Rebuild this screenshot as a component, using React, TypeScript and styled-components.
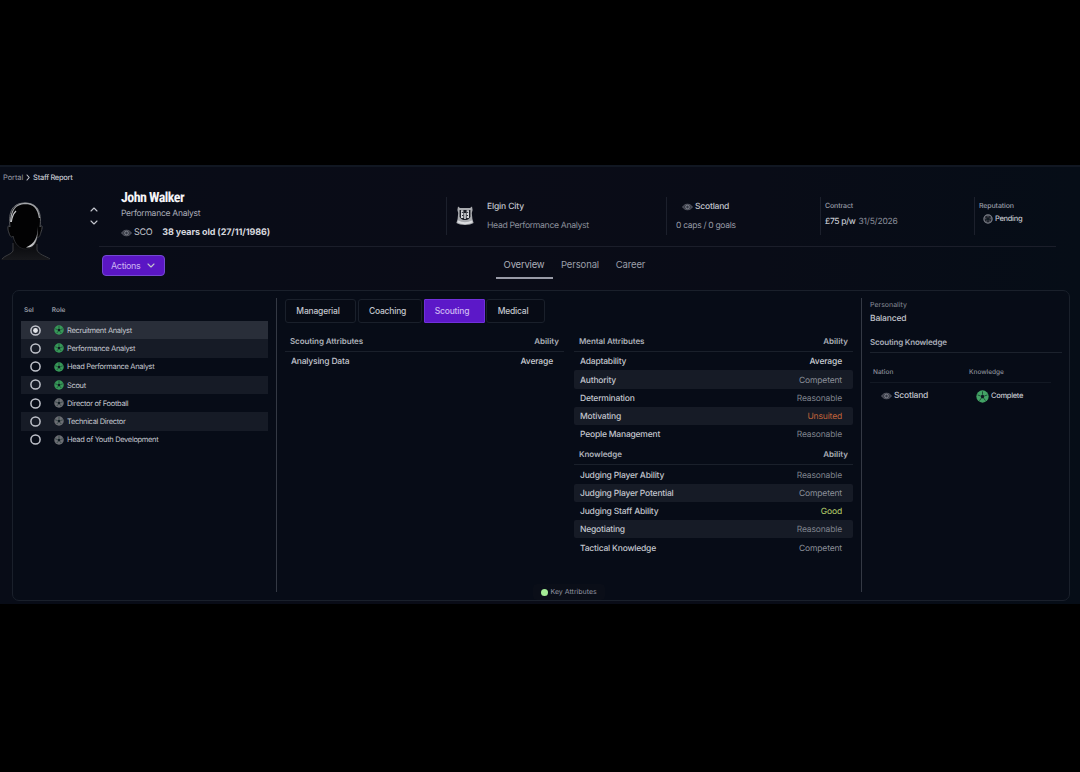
import React, { useState } from 'react';
import styled, { createGlobalStyle } from 'styled-components';

const GlobalStyle = createGlobalStyle`
  * {
    box-sizing: border-box;
  }

  body {
    margin: 0;
    background: #000;
    font-family: Inter, "Liberation Sans", sans-serif;
    color: #c3c6ce;
    text-rendering: geometricPrecision;
  }

  button {
    font-family: inherit;
    margin: 0;
    padding: 0;
    border: none;
    background: none;
    color: inherit;
  }
`;

const Page = styled.div`
  height: 772px;
  padding-top: 165px;
  background: #000;
  overflow: hidden;
`;

const Screen = styled.div`
  display: flex;
  flex-direction: column;
  height: 439px;
  padding-bottom: 3px;
  border-top: 2px solid #111722;
  background: linear-gradient(90deg, #080c17 0%, #0a0c17 45%, #090c17 70%, #060d17 100%);
`;

interface TextProps {
  size?: number;
  color?: string;
  weight?: number;
  spacing?: number;
}

const Text = styled.span<TextProps>`
  font-size: ${props => props.size ?? 8.5}px;
  line-height: 12px;
  font-weight: ${props => props.weight ?? 400};
  color: ${props => props.color ?? '#c3c6ce'};
  letter-spacing: ${props => props.spacing ?? 0}px;
  white-space: nowrap;
`;

const Breadcrumb = styled.nav`
  display: flex;
  align-items: center;
  gap: 3px;
  height: 21px;
  padding: 0 0 0 3px;
`;

const Header = styled.header`
  display: flex;
  height: 102px;
`;

const PortraitColumn = styled.div`
  display: flex;
  justify-content: space-between;
  width: 99px;
  padding-top: 14px;
`;

const Stepper = styled.div`
  display: flex;
  flex-direction: column;
  gap: 8px;
  width: 9px;
  padding-top: 5px;
`;

const HeaderBody = styled.div`
  flex: 1;
  margin-right: 24px;
`;

const InfoRow = styled.div`
  display: flex;
  height: 59px;
  border-bottom: 1px solid #1b1e2a;
`;

const Identity = styled.div`
  width: 347px;
  padding: 2px 0 0 22px;
`;

const Name = styled.h1`
  margin: 0;
  font-family: "Liberation Sans Narrow", "Roboto Condensed", "DejaVu Sans Condensed", sans-serif;
  font-size: 14px;
  line-height: 16px;
  font-weight: 700;
  letter-spacing: -0.55px;
  color: #f4f5f8;
`;

const Line = styled.div<{ top?: number; gap?: number; left?: number }>`
  display: flex;
  align-items: center;
  gap: ${props => props.gap ?? 3}px;
  height: 12px;
  margin-top: ${props => props.top ?? 0}px;
  padding-left: ${props => props.left ?? 0}px;
`;

const Fact = styled.div<{ width: number; indent: number; top: number }>`
  display: flex;
  width: ${props => props.width}px;
  height: 38px;
  margin-top: 9px;
  padding: ${props => props.top}px 0 0 ${props => props.indent}px;
  border-left: 1px solid #1c202c;
`;

const NavRow = styled.div`
  display: flex;
  align-items: flex-start;
  padding: 8px 0 0 3px;
`;

const ActionsButton = styled.button`
  display: flex;
  align-items: center;
  justify-content: space-between;
  width: 63px;
  height: 21px;
  padding: 0 9px 0 8px;
  border: 1px solid #7448d2;
  border-radius: 4px;
  background: #5a16c4;
`;

const PageTabs = styled.div`
  display: flex;
  margin-left: 331px;
`;

const PageTab = styled.button<{ active?: boolean; width: number }>`
  width: ${props => props.width}px;
  height: 24px;
  padding: 0 1px 6px 0;
  border-bottom: 2px solid ${props => (props.active ? '#999ba7' : 'transparent')};
`;

const Panel = styled.main`
  display: flex;
  height: 311px;
  margin: 0 10px 0 12px;
  padding: 7px 7px 8px 8px;
  border: 1px solid #1a202b;
  border-radius: 7px;
  background: #070c17;
`;

const Roles = styled.section`
  width: 255px;
`;

const RoleHead = styled.div`
  display: flex;
  height: 23px;
  padding: 6px 0 0 3px;
`;

const RoleRow = styled.div<{ shade?: string }>`
  display: flex;
  align-items: center;
  width: 247px;
  height: 18.25px;
  padding-left: 9px;
  background: ${props => props.shade ?? 'transparent'};

  > ${Text} {
    padding-top: 1.4px;
  }
`;

const Radio = styled.button`
  display: flex;
  margin-right: 13px;
`;

const RoleBadge = styled.span`
  display: flex;
  margin-right: 3px;
`;

const Attributes = styled.section`
  display: flex;
  flex-direction: column;
  width: 586px;
  padding: 1px 8px 0 8px;
  border-left: 1px solid #343944;
  border-right: 1px solid #343944;
`;

const CategoryTabs = styled.div`
  display: flex;
  height: 24px;
`;

const CategoryTab = styled.button<{ active?: boolean; width: number; gap: number }>`
  display: flex;
  align-items: center;
  justify-content: center;
  width: ${props => props.width}px;
  height: 24px;
  margin-right: ${props => props.gap}px;
  padding: 0 5px 1px 0;
  border: 1px solid ${props => (props.active ? '#7130db' : '#1a202b')};
  border-radius: ${props => (props.active ? 1 : 3)}px;
  background: ${props => (props.active ? '#5c18c8' : '#070b15')};
`;

const Tables = styled.div`
  display: flex;
  justify-content: space-between;
  flex: 1;
  padding-top: 7px;
`;

const Table = styled.div`
  width: 279px;
`;

const TableHead = styled.div`
  display: flex;
  justify-content: space-between;
  align-items: center;
  height: 22px;
  padding: 1px 5px 0;
  border-bottom: 1px solid #1a202b;
`;

const TableRow = styled.div<{ striped?: boolean }>`
  display: flex;
  justify-content: space-between;
  align-items: center;
  height: 18.25px;
  padding: 2.4px 11px 0 6px;
  border-radius: 2px;
  background: ${props => (props.striped ? '#161b26' : 'transparent')};
`;

/* the legend hangs over the lower end of the column rules */
const Legend = styled.div`
  display: flex;
  align-items: center;
  align-self: center;
  gap: 3px;
  width: 72px;
  height: 16px;
  margin: 0 1px -8px 0;
  padding-left: 8px;
  border-radius: 4px;
  background: #0a0e18;
`;

const LegendDot = styled.span`
  width: 7px;
  height: 7px;
  border-radius: 50%;
  background: #a4ec96;
`;

const Side = styled.section`
  display: flex;
  flex-direction: column;
  flex: 1;
  padding: 1px 0 0 8px;
`;

const SideTitle = styled.div`
  display: flex;
  height: 17px;
  margin-top: 11px;
  border-bottom: 1px solid #1c222d;
`;

const SideGrid = styled.div<{ ruled?: boolean; height: number; indent: number; first: number }>`
  display: grid;
  grid-template-columns: ${props => props.first}px 1fr;
  align-items: center;
  width: 181px;
  height: ${props => props.height}px;
  padding: ${props => (props.ruled ? 8 : 1)}px 0 0 ${props => props.indent}px;
  border-bottom: 1px solid ${props => (props.ruled ? '#131924' : 'transparent')};
`;

const Portrait = () => (
  <svg width="50" height="59" viewBox="0 0 50 59">
    <defs>
      <linearGradient id="shoulders" x1="0" y1="0" x2="0" y2="1">
        <stop offset="0" stopColor="#050609" />
        <stop offset="1" stopColor="#17181c" />
      </linearGradient>
      <linearGradient id="rim" x1="0" y1="0" x2="0" y2="1">
        <stop offset="0" stopColor="#8c8e92" />
        <stop offset="0.5" stopColor="#55575b" />
        <stop offset="1" stopColor="#1b1c20" />
      </linearGradient>
      <linearGradient id="jaw" x1="0" y1="0" x2="0" y2="1">
        <stop offset="0" stopColor="#4b4c50" />
        <stop offset="1" stopColor="#d3d4d6" />
      </linearGradient>
    </defs>
    <path d="M1 58C4 53 11 53 13 48V38H37V47C38 53 47 54 50 58Z" fill="url(#shoulders)" />
    <path d="M2 57C5 53 11 53 13 49V41M37 42V48C39 53 46 54 50 57" fill="none" stroke="#3e3f43" strokeWidth="0.9" />
    <path
      d="M10 25C8 22 7 26 9 31C10 35 12 36 13 34C15 43 20 47 26 47C32 47 36 42 37 35C39 36 40 34 41 30C43 25 42 22 40 25C42 9 37 1 25 1C13 1 8 9 10 25Z"
      fill="#020203"
      stroke="url(#rim)"
      strokeWidth="0.9"
    />
    <path d="M10.6 20C11 8 15 2 25 1.4C34 1.5 38 6 39.5 16" fill="none" stroke="#a4a6aa" strokeWidth="1.3" />
    <path d="M11.3 20C12 14 13 12 16 9" fill="none" stroke="#c4c5c7" strokeWidth="1.2" />
    <path d="M38 24C37.3 36 35 41 26 45.5C34 46.5 38.6 39 38 24Z" fill="url(#jaw)" />
  </svg>
);

const Crest = () => (
  <svg width="20" height="22" viewBox="0 0 20 22">
    <path d="M3 1.5L5 3H15L17 1.5L17.6 5L16.8 8L17.4 14L18.6 18C15 20.5 5 20.5 1.4 18L2.6 14L3.2 8L2.4 5Z" fill="#a9abaf" />
    <path d="M4.6 5V12C6 14.5 8 15 10 15C12 15 14 14.5 15.4 12V5Z" fill="#1c1e25" />
    <path d="M6 5.2H8.4V13H6ZM11.6 5.2H14V13H11.6ZM9.2 8H10.8V14H9.2Z" fill="#d4d5d8" />
    <path d="M6.8 7.4H8.6M11.4 7.4H13.2M7 10.5H8.4M11.6 10.5H13" stroke="#2a2d34" strokeWidth="1" />
    <path d="M2.8 16.4C7 18.9 13 18.9 17.2 16.4" fill="none" stroke="#dcdde0" strokeWidth="2" />
  </svg>
);

const Eye = () => (
  <svg width="11" height="8" viewBox="0 0 11 8">
    <path d="M0.6 4C2.8 0.3 8.2 0.3 10.4 4C8.2 7.7 2.8 7.7 0.6 4Z" fill="#3a3d47" stroke="#5d606b" strokeWidth="0.9" />
    <circle cx="5.5" cy="4" r="1.8" fill="#343844" stroke="#868993" strokeWidth="0.9" />
  </svg>
);

const RadioMark = ({ checked }: { checked: boolean }) => (
  <svg width="11" height="11" viewBox="0 0 11 11">
    <circle cx="5.5" cy="5.5" r="4.6" fill="none" stroke="#c0c3cb" strokeWidth="1.5" />
    {checked && <circle cx="5.5" cy="5.5" r="2.4" fill="#e4e6ea" />}
  </svg>
);

const Badge = ({ color, size = 10, hollow = false }: { color: string; size?: number; hollow?: boolean }) => (
  <svg width={size} height={size} viewBox="0 0 12 12">
    <circle cx="6" cy="6" r={hollow ? 4.9 : 5.7} fill={hollow ? '#20232c' : color} stroke={hollow ? color : 'none'} strokeWidth="1.5" />
    <g stroke={hollow ? color : '#123228'} strokeWidth="0.7">
      <path d="M6 4V1.3M8 5.4L10.5 4.6M7.2 7.6L8.7 9.8M4.8 7.6L3.3 9.8M4 5.4L1.5 4.6" />
    </g>
    <path d="M6 4.1L7.8 5.4L7.1 7.5H4.9L4.2 5.4Z" fill="#101b22" />
  </svg>
);

const Chevron = ({ d, width = 8, height = 5 }: { d: string; width?: number; height?: number }) => (
  <svg width={width} height={height} viewBox={`0 0 ${width} ${height}`}>
    <path d={d} fill="none" stroke="#c4c6ce" strokeWidth="1.1" strokeLinecap="round" strokeLinejoin="round" />
  </svg>
);

const roles = [
  { name: 'Recruitment Analyst', suited: true },
  { name: 'Performance Analyst', suited: true },
  { name: 'Head Performance Analyst', suited: true },
  { name: 'Scout', suited: true },
  { name: 'Director of Football', suited: false },
  { name: 'Technical Director', suited: false },
  { name: 'Head of Youth Development', suited: false },
];

const mental = [
  ['Adaptability', 'Average'],
  ['Authority', 'Competent'],
  ['Determination', 'Reasonable'],
  ['Motivating', 'Unsuited'],
  ['People Management', 'Reasonable'],
];

const knowledge = [
  ['Judging Player Ability', 'Reasonable'],
  ['Judging Player Potential', 'Competent'],
  ['Judging Staff Ability', 'Good'],
  ['Negotiating', 'Reasonable'],
  ['Tactical Knowledge', 'Competent'],
];

const abilityColors: Record<string, string> = {
  Average: '#c9ccd3',
  Competent: '#8b8f99',
  Reasonable: '#7e828c',
  Unsuited: '#c2643a',
  Good: '#b9d36c',
};

const categories = [
  { name: 'Managerial', width: 71, gap: 2 },
  { name: 'Coaching', width: 64, gap: 2 },
  { name: 'Scouting', width: 61, gap: 1 },
  { name: 'Medical', width: 59, gap: 0 },
];

const AttributeGroup = ({ title, rows }: { title: string; rows: string[][] }) => (
  <>
    <TableHead>
      <Text size={8} weight={600} color="#adb1ba" spacing={-0.08}>{title}</Text>
      <Text size={8} weight={600} color="#adb1ba">Ability</Text>
    </TableHead>
    {rows.map(([name, ability], i) => (
      <TableRow key={name} striped={i % 2 === 1}>
        <Text weight={500} spacing={-0.2}>{name}</Text>
        <Text weight={ability === 'Average' ? 500 : 400} color={abilityColors[ability]} spacing={-0.15}>{ability}</Text>
      </TableRow>
    ))}
  </>
);

const App: React.FC = () => {
  const [selectedRole, setSelectedRole] = useState(0);
  const [category, setCategory] = useState('Scouting');

  const roleShade = (i: number) => {
    if (i === selectedRole) return '#292e39';
    return i % 2 === 1 ? '#161b26' : undefined;
  };

  return (
    <Page>
      <GlobalStyle />
      <Screen>
        <Breadcrumb>
          <Text size={7.5} color="#969aa5" spacing={-0.1}>Portal</Text>
          <Chevron d="M1 1L3.2 3.5L1 6" width={4} height={7} />
          <Text size={7.5} weight={500} spacing={-0.3}>Staff Report</Text>
        </Breadcrumb>

        <Header>
          <PortraitColumn>
            <Portrait />
            <Stepper>
              <Chevron d="M1 4L4 1L7 4" />
              <Chevron d="M1 1L4 4L7 1" />
            </Stepper>
          </PortraitColumn>
          <HeaderBody>
            <InfoRow>
              <Identity>
                <Name>John Walker</Name>
                <Line top={2}>
                  <Text color="#a9acb7" spacing={-0.26}>Performance Analyst</Text>
                </Line>
                <Line top={7} gap={2}>
                  <Eye />
                  <Text size={9} spacing={-0.3}>SCO</Text>
                  <Line left={8}>
                    <Text size={9} weight={700} color="#d5d7dd" spacing={-0.1}>38 years old (27/11/1986)</Text>
                  </Line>
                </Line>
              </Identity>
              <Fact width={220} indent={8} top={4}>
                <Line top={9}><Crest /></Line>
                <div>
                  <Line left={12}><Text size={8.5} weight={500} spacing={-0.15}>Elgin City</Text></Line>
                  <Line top={7} left={12}><Text size={8.7} color="#8b8f9b" spacing={-0.36}>Head Performance Analyst</Text></Line>
                </div>
              </Fact>
              <Fact width={154} indent={9} top={4}>
                <div>
                  <Line left={6} gap={2}><Eye /><Text size={8.5} weight={500} spacing={-0.2}>Scotland</Text></Line>
                  <Line top={7}><Text size={8.5} color="#969aa5" spacing={-0.3}>0 caps / 0 goals</Text></Line>
                </div>
              </Fact>
              <Fact width={154} indent={4} top={3}>
                <div>
                  <Line><Text size={7} weight={500} color="#9a9ea9" spacing={-0.12}>Contract</Text></Line>
                  <Line top={4} gap={3}>
                    <Text size={8.5} weight={500} spacing={-0.35}>£75 p/w</Text>
                    <Text size={8.5} color="#8b8f9b" spacing={-0.22}>31/5/2026</Text>
                  </Line>
                </div>
              </Fact>
              <Fact width={82} indent={4} top={3}>
                <div>
                  <Line><Text size={7} weight={500} color="#9a9ea9" spacing={-0.12}>Reputation</Text></Line>
                  <Line top={1} left={4} gap={2}><Badge color="#7b7e87" hollow /><Text size={7.5} weight={500} spacing={-0.3}>Pending</Text></Line>
                </div>
              </Fact>
            </InfoRow>
            <NavRow>
              <ActionsButton>
                <Text size={9} color="#cbb4f2" spacing={-0.35}>Actions</Text>
                <Chevron d="M1 1L4 4L7 1" />
              </ActionsButton>
              <PageTabs>
                <PageTab active width={57}><Text size={9.5} color="#adb0ba" spacing={-0.2}>Overview</Text></PageTab>
                <PageTab width={55}><Text size={9.5} color="#9b9fa9" spacing={-0.12}>Personal</Text></PageTab>
                <PageTab width={46}><Text size={9.5} color="#9b9fa9" spacing={-0.12}>Career</Text></PageTab>
              </PageTabs>
            </NavRow>
          </HeaderBody>
        </Header>

        <Panel>
          <Roles>
            <RoleHead>
              <Line gap={18}>
                <Text size={6.5} weight={600} color="#969aa4">Sel</Text>
                <Text size={6.5} weight={600} color="#969aa4">Role</Text>
              </Line>
            </RoleHead>
            {roles.map((role, i) => (
              <RoleRow key={role.name} shade={roleShade(i)}>
                <Radio onClick={() => setSelectedRole(i)}>
                  <RadioMark checked={i === selectedRole} />
                </Radio>
                <RoleBadge><Badge color={role.suited ? '#379858' : '#6b6d73'} /></RoleBadge>
                <Text size={7.5} spacing={-0.33}>{role.name}</Text>
              </RoleRow>
            ))}
          </Roles>

          <Attributes>
            <CategoryTabs>
              {categories.map(item => (
                <CategoryTab
                  key={item.name}
                  width={item.width}
                  gap={item.gap}
                  active={item.name === category}
                  onClick={() => setCategory(item.name)}
                >
                  <Text weight={500} color={item.name === category ? '#ceb8f3' : undefined} spacing={-0.2}>{item.name}</Text>
                </CategoryTab>
              ))}
            </CategoryTabs>
            <Tables>
              <Table>
                <AttributeGroup title="Scouting Attributes" rows={[['Analysing Data', 'Average']]} />
              </Table>
              <Table>
                <AttributeGroup title="Mental Attributes" rows={mental} />
                <AttributeGroup title="Knowledge" rows={knowledge} />
              </Table>
            </Tables>
            <Legend>
              <LegendDot />
              <Text size={7} color="#9194a0">Key Attributes</Text>
            </Legend>
          </Attributes>

          <Side>
            <Text size={7} color="#898d98">Personality</Text>
            <Line top={2}><Text weight={500} spacing={-0.15}>Balanced</Text></Line>
            <SideTitle><Text size={8} weight={600} color="#a9adb7" spacing={-0.18}>Scouting Knowledge</Text></SideTitle>
            <SideGrid ruled height={30} indent={3} first={96}>
              <Text size={6.5} weight={500} color="#8b8f9a">Nation</Text>
              <Text size={6.5} weight={500} color="#8b8f9a">Knowledge</Text>
            </SideGrid>
            <SideGrid height={26} indent={11} first={95}>
              <Line gap={2}><Eye /><Text weight={500} spacing={-0.2}>Scotland</Text></Line>
              <Line gap={2}><Badge color="#43a365" size={13} /><Text size={7.5} weight={500} spacing={-0.3}>Complete</Text></Line>
            </SideGrid>
          </Side>
        </Panel>
      </Screen>
    </Page>
  );
};

export default App;
